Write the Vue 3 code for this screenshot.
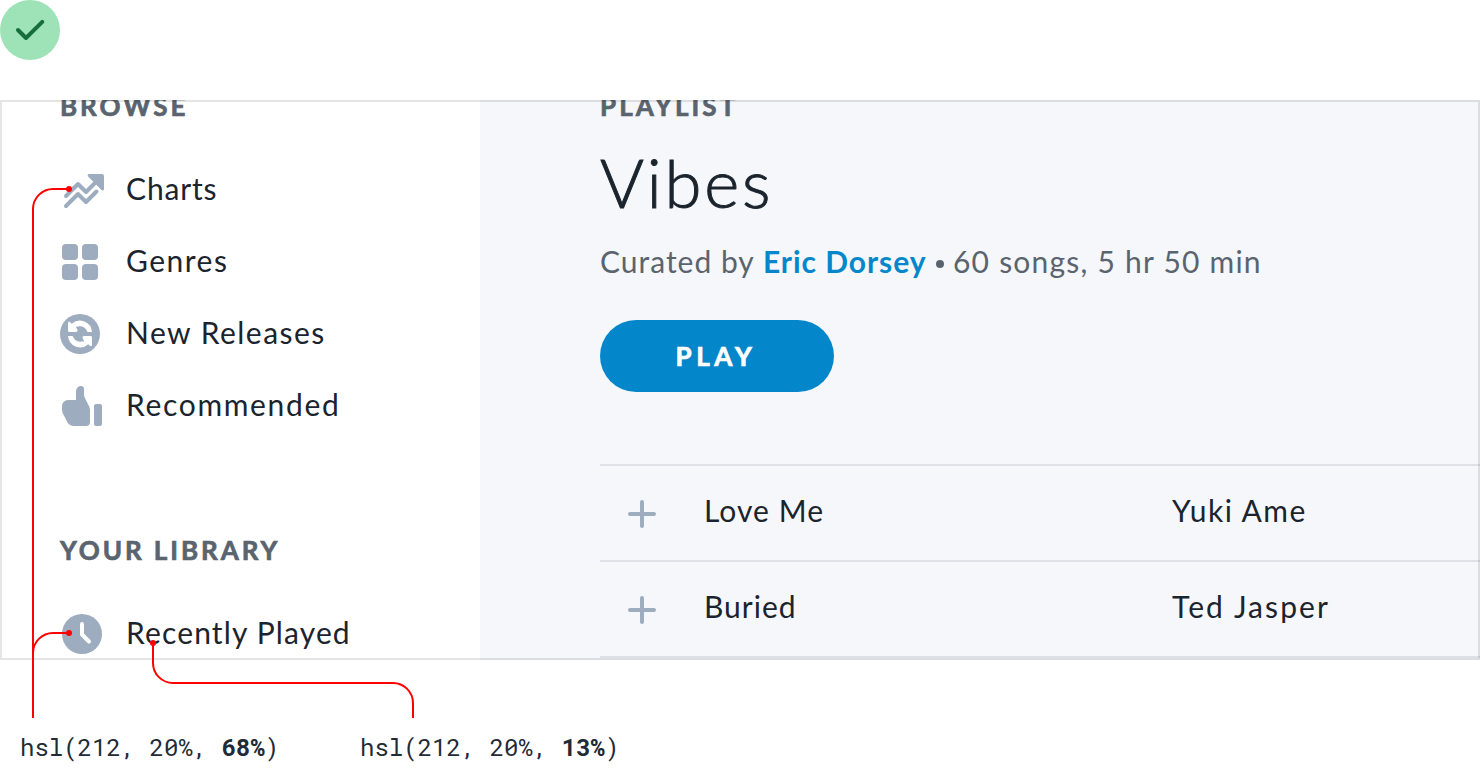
<script setup>
const browse = [
  { id: 'charts', label: 'Charts' },
  { id: 'genres', label: 'Genres' },
  { id: 'releases', label: 'New Releases' },
  { id: 'recommended', label: 'Recommended' },
]
const songs = [
  { id: 'love-me', title: 'Love Me', artist: 'Yuki Ame' },
  { id: 'buried', title: 'Buried', artist: 'Ted Jasper' },
]
const swatches = [
  { prefix: 'hsl(212, 20%, ', lightness: '68%' },
  { prefix: 'hsl(212, 20%, ', lightness: '13%' },
]
const arrow = 'M68 323.200c0-1.400 1.200-1.800 2.100-.9l1.600 1.500A12.200 12.200 0 0 1 92 332h-4.600a8.600 8.600 0 0 0-9-5.600c-1.200 0-2.200.2-2.600.3l1.400 2.600c.8 1.400.2 2.700-1.400 2.700H69.500c-.9 0-1.500-.6-1.500-1.500z'
</script>

<template>
  <div class="page">
    <svg class="status" viewBox="0 0 60 60">
      <circle cx="30" cy="30" r="30" fill="#9ee3b8" />
      <path d="M18 30l8 8 16.3-16.2" fill="none" stroke="#166f3a" stroke-width="4" stroke-linecap="round" stroke-linejoin="round" />
    </svg>

    <div class="frame">
      <aside class="sidebar">
        <h2 class="heading heading--browse">BROWSE</h2>
        <nav>
          <a v-for="item in browse" :key="item.id" class="item">
            <svg v-if="item.id === 'charts'" class="icon" viewBox="60 168 44 44">
              <path d="M66 196l12-12 8 8 10-10M66 206l12-12 8 8 10.5-10.5" class="line" />
              <path d="M89 174h13a2 2 0 0 1 2 2v13c0 1.500-1.500 1.800-2.500 1l-13.200-13.200C87 175.500 87.800 174 89 174z" class="fill" />
            </svg>
            <svg v-else-if="item.id === 'genres'" class="icon" viewBox="60 240 44 44">
              <rect x="62" y="244" width="16" height="16" rx="4" class="fill" />
              <rect x="82" y="244" width="16" height="16" rx="4" class="fill" />
              <rect x="62" y="264" width="16" height="16" rx="4" class="fill" />
              <rect x="82" y="264" width="16" height="16" rx="4" class="fill" />
            </svg>
            <svg v-else-if="item.id === 'releases'" class="icon" viewBox="60 312 44 44">
              <circle cx="80" cy="334" r="20" class="fill" />
              <path fill="#fff" :d="arrow" />
              <path fill="#fff" transform="rotate(180 80 334)" :d="arrow" />
            </svg>
            <svg v-else class="icon" viewBox="60 384 44 44">
              <path d="M76 400v-8c0-3.500 2-6 5-6 2 0 3 1.300 3 3v5c0 2 .6 3.500 1.500 5.200L89 406c.7 1.500 1 2.800 1 4.500V422a4 4 0 0 1-4 4H74c-3 0-5.200-1.200-6.600-3.800l-4-7.600c-1-2-1.400-3.600-1.400-5.600v-3a6 6 0 0 1 6-6z" class="fill" />
              <rect x="94" y="404" width="8" height="22" rx="2" class="fill" />
            </svg>
            <span :class="['label', 'label--' + item.id]">{{ item.label }}</span>
          </a>
        </nav>
        <h2 class="heading heading--library">YOUR LIBRARY</h2>
        <a class="item">
          <svg class="icon" viewBox="60 612 44 44">
            <circle cx="82" cy="634" r="20" class="fill" />
            <path d="M82 624v10.500l7 7" fill="none" stroke="#fff" stroke-width="4" stroke-linecap="round" stroke-linejoin="round" />
          </svg>
          <span class="label label--recent">Recently Played</span>
        </a>
      </aside>

      <main class="playlist">
        <h2 class="heading heading--playlist">PLAYLIST</h2>
        <h1 class="title">Vibes</h1>
        <p class="meta">
          <span class="by">Curated by</span>
          <a class="author">Eric Dorsey</a>
          <span class="dot"></span>
          <span class="stats">60 songs, 5 hr 50 min</span>
        </p>
        <button class="play">PLAY</button>
        <div class="songs">
          <div v-for="song in songs" :key="song.id" :class="['song', 'song--' + song.id]">
            <svg class="add" viewBox="0 0 28 28"><path d="M14 2v24M2 14h24" class="line" /></svg>
            <span class="song-title">{{ song.title }}</span>
            <span class="artist">{{ song.artist }}</span>
          </div>
        </div>
      </main>
    </div>

    <div class="legend">
      <code v-for="s in swatches" :key="s.lightness">{{ s.prefix }}<b>{{ s.lightness }}</b>)</code>
    </div>

    <svg class="callouts" viewBox="0 0 1480 780">
      <g fill="none" stroke="#f00" stroke-width="2">
        <path d="M33 718V209a20 20 0 0 1 20-20h16" />
        <path d="M33 653a20 20 0 0 1 20-20h16" />
        <path d="M153 643v20a20 20 0 0 0 20 20h220a20 20 0 0 1 20 20v15" />
      </g>
      <g fill="#f00">
        <circle cx="69" cy="189" r="3" />
        <circle cx="69" cy="633" r="3" />
        <circle cx="153" cy="643" r="3" />
      </g>
    </svg>
  </div>
</template>

<style>
body {
  background: #fff;
}
</style>

<style scoped>
.page {
  position: relative;
  width: 1480px;
  height: 780px;
  overflow: hidden;
  font-family: Lato, "Liberation Sans", sans-serif;
  color: #1b242d;
}
.status {
  display: block;
  width: 60px;
  height: 60px;
}
.frame {
  position: relative;
  display: flex;
  height: 560px;
  margin-top: 40px;
  overflow: hidden;
}
.frame::after {
  content: '';
  position: absolute;
  inset: 0;
  border: 2px solid rgba(0, 0, 0, 0.1);
}
.sidebar {
  box-sizing: border-box;
  flex: 0 0 480px;
  padding-left: 60px;
}
.playlist {
  flex: 1;
  min-width: 0;
  padding-left: 120px;
  background: #f5f7fb;
}
.heading {
  margin: 0;
  font-size: 26px;
  line-height: 40px;
  font-weight: 700;
  color: #5a646e;
  white-space: nowrap;
  -webkit-text-stroke: 0.7px currentColor;
}
.heading--browse {
  margin: -14px 0 28px;
  letter-spacing: 3px;
}
.heading--library {
  margin: 88px 0 28px;
  letter-spacing: 2.95px;
}
.heading--playlist {
  margin-top: -14px;
  letter-spacing: 3.1px;
}
.item {
  display: flex;
  align-items: center;
  gap: 22px;
  height: 72px;
}
.icon {
  flex: none;
  width: 44px;
  height: 44px;
}
.fill {
  fill: #9eacbf;
}
.line {
  fill: none;
  stroke: #9eacbf;
  stroke-width: 4;
  stroke-linecap: round;
  stroke-linejoin: round;
}
.label {
  padding-bottom: 4px;
  font-size: 30px;
  line-height: 36px;
  white-space: nowrap;
}
.label--charts {
  letter-spacing: 0.85px;
}
.label--genres {
  letter-spacing: 1.5px;
}
.label--releases {
  letter-spacing: 1.48px;
}
.label--recommended {
  letter-spacing: 1.67px;
}
.label--recent {
  letter-spacing: 1.15px;
}
.title {
  margin: 16px 0 0;
  font-size: 67px;
  line-height: 80px;
  font-weight: 300;
  letter-spacing: 2.8px;
  -webkit-text-stroke: 1px currentColor;
}
.meta {
  display: flex;
  align-items: center;
  height: 40px;
  margin: 19px 0 0;
  font-size: 30px;
  line-height: 40px;
  color: #5a646e;
  white-space: nowrap;
}
.by {
  width: 163px;
  letter-spacing: 1px;
}
.author {
  width: 173px;
  font-weight: 700;
  letter-spacing: 0.95px;
  color: #0487ca;
}
.dot {
  width: 8px;
  height: 8px;
  margin: 6px 9px 0 0;
  border-radius: 50%;
  background: #5a646e;
}
.stats {
  letter-spacing: 1.22px;
}
.play {
  display: block;
  width: 234px;
  height: 72px;
  margin: 39px 0 72px;
  padding: 0 2px 0 0;
  border: 0;
  border-radius: 36px;
  background: #0487ca;
  color: #fff;
  font: 700 26px/40px Lato, "Liberation Sans", sans-serif;
  letter-spacing: 4.6px;
  -webkit-text-stroke: 0.7px currentColor;
}
.song {
  box-sizing: border-box;
  display: grid;
  grid-template-columns: 76px 468px auto;
  align-items: center;
  height: 96px;
  padding-left: 28px;
  border-top: 2px solid #dfe1e9;
  font-size: 30px;
  line-height: 36px;
}
.songs {
  border-bottom: 2px solid #dfe1e9;
}
.add {
  width: 28px;
  height: 28px;
  margin-top: 2px;
}
.song span {
  padding-bottom: 6px;
}
.song--love-me .song-title {
  letter-spacing: 1.05px;
}
.song--buried .song-title {
  letter-spacing: 1px;
}
.song--love-me .artist {
  letter-spacing: 1.5px;
}
.song--buried .artist {
  letter-spacing: 2.1px;
}
.legend {
  display: flex;
  gap: 80.8px;
  margin-top: 71px;
  padding-left: 20px;
}
.legend code {
  font: 24px/32px "Roboto Mono", "Liberation Mono", monospace;
  color: #1f2b35;
  white-space: pre;
}
.callouts {
  position: absolute;
  inset: 0;
  width: 1480px;
  height: 780px;
}
</style>
